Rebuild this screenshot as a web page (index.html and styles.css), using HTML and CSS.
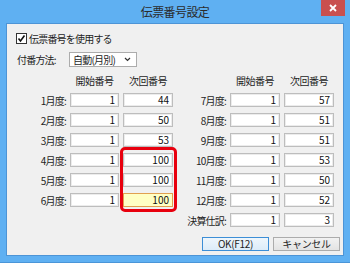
FILE: index.html
```html
<!DOCTYPE html>
<html>

<head>
    <meta charset="utf-8">
    <title>伝票番号設定</title>
    <link rel="stylesheet" href="styles.css">
</head>

<body>
    <div class="window">
        <div class="titlebar">
            <span class="title">伝票番号設定</span>
            <div class="close">
                <svg width="8" height="8" viewBox="0 0 8 8"><path d="M1 1L7 7M7 1L1 7" stroke="#fff" stroke-width="1.8"/></svg>
            </div>
        </div>
        <div class="client">
            <div class="use">
                <span class="check">
                    <svg width="9" height="9" viewBox="0 0 9 9"><path d="M1.5 4.5L3.5 7L7.5 1.5" fill="none" stroke="#111" stroke-width="1.6"/></svg>
                </span>
                <span>伝票番号を使用する</span>
            </div>
            <div class="method">
                <span class="method-label">付番方法:</span>
                <div class="select">
                    <span>自動(月別)</span>
                    <svg width="7" height="5" viewBox="0 0 7 5"><path d="M1 1L3.5 3.5L6 1" fill="none" stroke="#333" stroke-width="1.2"/></svg>
                </div>
            </div>
            <div class="tables">
                <div class="half left-half">
                    <span></span><span class="head">開始番号</span><span class="head">次回番号</span>
                    <span class="lbl">1月度:</span><div class="num">1</div><div class="num">44</div>
                    <span class="lbl">2月度:</span><div class="num">1</div><div class="num">50</div>
                    <span class="lbl">3月度:</span><div class="num">1</div><div class="num">53</div>
                    <span class="lbl">4月度:</span><div class="num">1</div><div class="num">100</div>
                    <span class="lbl">5月度:</span><div class="num">1</div><div class="num">100</div>
                    <span class="lbl">6月度:</span><div class="num">1</div><div class="num focus">100</div>
                    <div class="mark"></div>
                </div>
                <div class="half right-half">
                    <span></span><span class="head">開始番号</span><span class="head">次回番号</span>
                    <span class="lbl">7月度:</span><div class="num">1</div><div class="num">57</div>
                    <span class="lbl">8月度:</span><div class="num">1</div><div class="num">51</div>
                    <span class="lbl">9月度:</span><div class="num">1</div><div class="num">51</div>
                    <span class="lbl">10月度:</span><div class="num">1</div><div class="num">53</div>
                    <span class="lbl">11月度:</span><div class="num">1</div><div class="num">50</div>
                    <span class="lbl">12月度:</span><div class="num">1</div><div class="num">52</div>
                    <span class="lbl">決算仕訳:</span><div class="num">1</div><div class="num">3</div>
                </div>
            </div>
            <div class="buttons">
                <div class="btn default">OK(F12)</div>
                <div class="btn">キャンセル</div>
            </div>
        </div>
    </div>
</body>

</html>
```

FILE: styles.css
```css
* {
    margin: 0;
    padding: 0;
    box-sizing: border-box;
}

body {
    width: 350px;
    height: 263px;
    overflow: hidden;
    font-family: "Noto Sans CJK JP", "Noto Sans", sans-serif;
    font-size: 10px;
    color: #1e1e1e;
}

.window {
    width: 350px;
    height: 263px;
    background: #5fb0f2;
    border-bottom: 1px solid #4a95d8;
    display: flex;
    flex-direction: column;
    padding: 0 6px 6px 6px;
}

.titlebar {
    height: 23px;
    display: flex;
    justify-content: center;
    align-items: center;
    position: relative;
}

.title {
    font-size: 12px;
    letter-spacing: -0.6px;
    color: #2b2b2b;
    margin-top: -1px;
}

.close {
    position: absolute;
    top: 0;
    right: -1px;
    width: 24px;
    height: 16px;
    background: #c9504f;
    display: flex;
    justify-content: center;
    align-items: center;
}

.client {
    flex: 1;
    background: #f0f0f0;
    border: 1px solid #4d94d6;
    position: relative;
    letter-spacing: -0.8px;
}

.use {
    height: 14px;
    margin: 7px 0 0 9px;
    display: flex;
    align-items: center;
    gap: 2px;
}

.check {
    width: 11px;
    height: 11px;
    border: 1px solid #333;
    background: #fff;
    display: flex;
    justify-content: center;
    align-items: center;
}

.method {
    height: 15px;
    margin: 7px 0 0 10px;
    display: flex;
    align-items: center;
}

.method-label {
    width: 52px;
}

.select {
    width: 68px;
    height: 15px;
    border: 1px solid #acacac;
    background: #fff;
    display: flex;
    align-items: center;
    justify-content: space-between;
    padding: 0 5px 0 3px;
}

.tables {
    display: flex;
    margin-top: 6px;
}

.half {
    display: grid;
    grid-auto-rows: 14px;
    row-gap: 6px;
    column-gap: 4px;
    align-items: center;
    position: relative;
}

.left-half {
    width: 168px;
    padding-left: 5px;
    grid-template-columns: 54px 49px 50px;
}

.right-half {
    grid-template-columns: 51px 50px 50px;
}

.head {
    text-align: center;
    letter-spacing: -0.5px;
}

.lbl {
    text-align: right;
}

.num {
    height: 14px;
    background: #fff;
    border: 1px solid #bdbdbd;
    box-shadow: inset 0 0 0 1px #ececec;
    text-align: right;
    padding-right: 3px;
    line-height: 12px;
    font-size: 10px;
    letter-spacing: 0;
    color: #111;
}

.focus {
    background: #ffffc4;
    border-color: #e0a050;
    box-shadow: none;
}

.mark {
    position: absolute;
    left: 113px;
    top: 74px;
    width: 57px;
    height: 65px;
    border: 3px solid #e8000e;
    border-radius: 5px;
}

.buttons {
    display: flex;
    justify-content: flex-end;
    gap: 4px;
    margin: 10px 3px 0 0;
}

.btn {
    width: 67px;
    height: 14px;
    border: 1px solid #acacac;
    background: linear-gradient(#f2f2f2, #e3e3e3);
    text-align: center;
    line-height: 12px;
    letter-spacing: -0.3px;
}

.default {
    border-color: #3c8ed6;
    background: linear-gradient(#eef6fc, #dcecf9);
}
```
